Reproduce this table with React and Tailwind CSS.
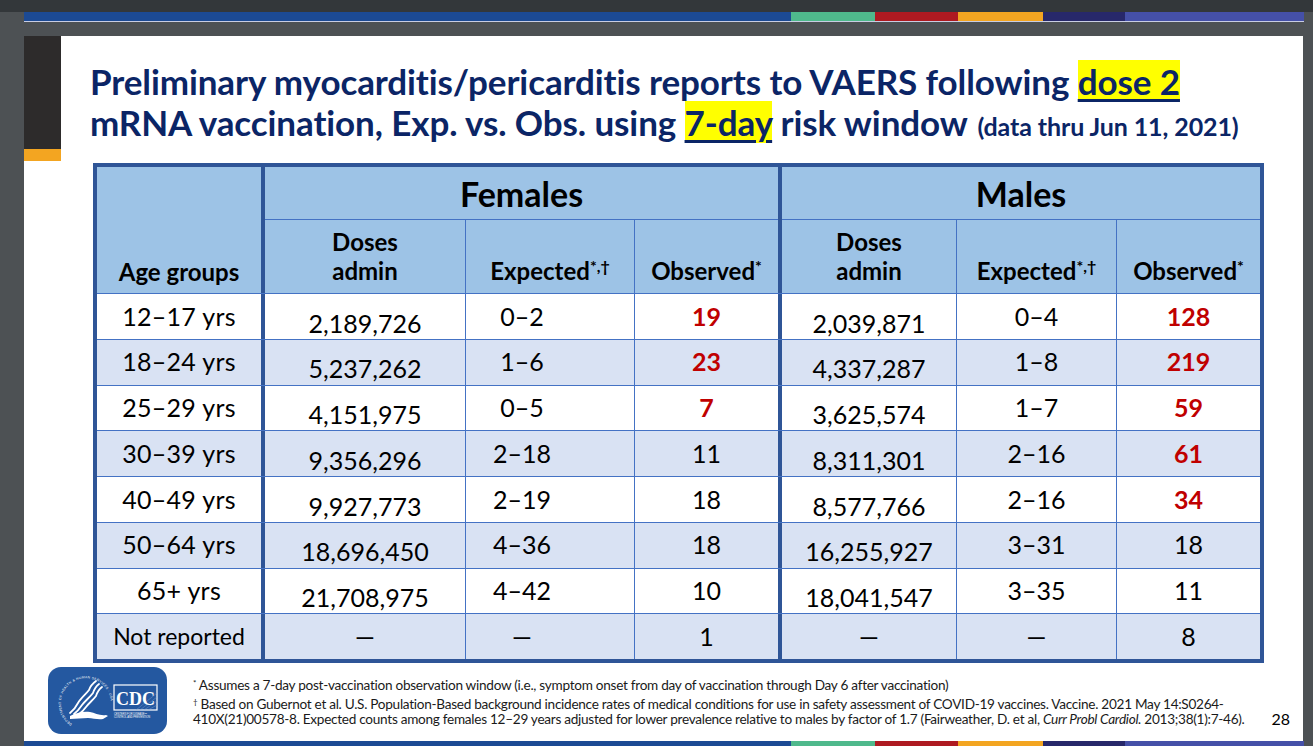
import React from "react";

const rows = [
  ["12–17 yrs", "2,189,726", "0–2", "19", true, "2,039,871", "0–4", "128", true],
  ["18–24 yrs", "5,237,262", "1–6", "23", true, "4,337,287", "1–8", "219", true],
  ["25–29 yrs", "4,151,975", "0–5", "7", true, "3,625,574", "1–7", "59", true],
  ["30–39 yrs", "9,356,296", "2–18", "11", false, "8,311,301", "2–16", "61", true],
  ["40–49 yrs", "9,927,773", "2–19", "18", false, "8,577,766", "2–16", "34", true],
  ["50–64 yrs", "18,696,450", "4–36", "18", false, "16,255,927", "3–31", "18", false],
  ["65+ yrs", "21,708,975", "4–42", "10", false, "18,041,547", "3–35", "11", false],
  ["Not reported", "—", "—", "1", false, "—", "—", "8", false],
];

function Stripe({ h }) {
  return (
    <div className={`flex w-[1280px] ${h}`}>
      <div className="w-[767px] bg-[#1c4a94]" />
      <div className="w-[84px] bg-[#4fb98c]" />
      <div className="w-[83px] bg-[#ae1a21]" />
      <div className="w-[85px] bg-[#f3a521]" />
      <div className="w-[82px] bg-[#27286a]" />
      <div className="w-[179px] bg-[#4550a8]" />
    </div>
  );
}

function CdcLogo() {
  return (
    <svg width="119" height="67" viewBox="0 0 119 67">
      <rect x="0" y="0" width="119" height="67" rx="13" fill="#2458a0" />
      <defs>
        <path id="sealArc" d="M24 57 A25 25 0 1 1 52 57" />
      </defs>
      <text fontSize="3.3" fill="white" fontFamily="Liberation Sans, sans-serif" letterSpacing="0.35">
        <textPath href="#sealArc">DEPARTMENT OF HEALTH &amp; HUMAN SERVICES · USA</textPath>
      </text>
      <path d="M48 14 C 44 17, 42 20, 41 23 C 38 27, 33 31, 30 36 C 28 40, 26 43, 22 46" stroke="white" strokeWidth="1.8" fill="none" strokeLinecap="round" />
      <path d="M51 17 C 47 20, 46 23, 45 26 C 42 30, 37 34, 34 38 C 32 41, 30 44, 26 47" stroke="white" strokeWidth="1.8" fill="none" strokeLinecap="round" />
      <path d="M54 20 C 50 23, 49 26, 48 29 C 45 33, 41 36, 38 40 C 36 43, 34 45, 30 48" stroke="white" strokeWidth="1.8" fill="none" strokeLinecap="round" />
      <path d="M22 49 C 28 46, 35 44, 42 45 C 47 46, 52 49, 58 48 L 60 49 L 55 52 C 50 53, 45 51, 40 51 C 34 51, 28 52, 22 52 Z" fill="white" />
      <rect x="66" y="18" width="43" height="25" fill="#2458a0" stroke="white" strokeWidth="1.2" />
      <path d="M92 43 L109 30 M96 43 L109 34 M100 43 L109 38 M88 43 L109 26" stroke="#7fa3d6" strokeWidth="0.4" />
      <text x="87.5" y="38" textAnchor="middle" fontFamily="Liberation Serif, serif" fontWeight="bold" fontSize="18" fill="white">CDC</text>
      <text x="66" y="47.5" fontFamily="Liberation Sans, sans-serif" fontSize="2.6" fill="white">CENTERS FOR DISEASE™</text>
      <text x="66" y="51" fontFamily="Liberation Sans, sans-serif" fontSize="2.6" fill="white">CONTROL AND PREVENTION</text>
    </svg>
  );
}

function Sep() {
  return <div className="w-[4px] shrink-0 bg-[#2f5597]" />;
}

function DataRow({ r, i }) {
  const bg = i % 2 === 1 ? "bg-[#d9e2f3]" : "bg-white";
  const last = i === rows.length - 1;
  const dosesPad = last ? "" : "pt-[14px]";
  const obs = (v, red) =>
    red ? (
      <span className="font-bold text-[#c00000]">{v}</span>
    ) : (
      <span>{v}</span>
    );
  return (
    <div className={`flex h-[45.75px] border-t border-[#4472c4] ${bg} text-[25px] text-black`}>
      <div className={`w-[164px] flex items-center justify-center ${last ? "text-[23px]" : "tracking-[0.3px]"}`}>{r[0]}</div>
      <Sep />
      <div className={`w-[200px] flex items-center justify-center ${dosesPad}`}>{r[1]}</div>
      <div className="w-[169px] flex items-center justify-center border-l border-[#4472c4] pr-[56px]">{r[2]}</div>
      <div className="w-[144px] flex items-center justify-center border-l border-[#4472c4]">{obs(r[3], r[4])}</div>
      <Sep />
      <div className={`w-[174px] flex items-center justify-center ${dosesPad}`}>{r[5]}</div>
      <div className="w-[160px] flex items-center justify-center border-l border-[#4472c4]">{r[6]}</div>
      <div className="w-[144px] flex items-center justify-center border-l border-[#4472c4]">{obs(r[7], r[8])}</div>
    </div>
  );
}

function HeadCols({ w1, w2 }) {
  return (
    <div className="flex flex-1 text-[24px] leading-[29px]">
      <div className={`${w1} flex flex-col items-center justify-end pb-[8px]`}>
        <div>Doses</div>
        <div>admin</div>
      </div>
      <div className={`${w2} flex items-end justify-center pb-[8px] border-l border-[#4472c4]`}>
        <span>
          Expected<sup className="text-[16px]">*,†</sup>
        </span>
      </div>
      <div className="w-[144px] flex items-end justify-center pb-[8px] border-l border-[#4472c4]">
        <span>
          Observed<sup className="text-[16px]">*</sup>
        </span>
      </div>
    </div>
  );
}

function Table() {
  return (
    <div className="w-[1171px] border-4 border-[#2f5597] font-['Lato',sans-serif]">
      <div className="flex h-[126px] bg-[#9dc3e6] font-bold text-black">
        <div className="w-[164px] flex items-end justify-center pb-[7px] text-[24px] leading-[29px]">Age groups</div>
        <Sep />
        <div className="w-[513px] flex flex-col">
          <div className="h-[53px] flex items-center justify-center text-[34px] border-b border-[#4472c4]">Females</div>
          <HeadCols w1="w-[200px]" w2="w-[169px]" />
        </div>
        <Sep />
        <div className="w-[478px] flex flex-col">
          <div className="h-[53px] flex items-center justify-center text-[34px] border-b border-[#4472c4]">Males</div>
          <HeadCols w1="w-[174px]" w2="w-[160px]" />
        </div>
      </div>
      {rows.map((r, i) => (
        <DataRow key={i} r={r} i={i} />
      ))}
    </div>
  );
}

export default function App() {
  return (
    <div className="w-[1313px] h-[746px] bg-[#4d5154] overflow-hidden flex flex-col font-['Lato',sans-serif]">
      <div className="h-[12px] bg-[#33373a]" />
      <div className="ml-[24px]">
        <Stripe h="h-[9px]" />
        <div className="w-[1280px] h-px bg-[#c9cde3]" />
      </div>
      <div className="h-[14px]" />
      <div className="ml-[24px] w-[1279px] h-[705px] bg-white flex flex-col">
        <div className="flex h-[627px]">
          <div className="w-[37px] flex flex-col">
            <div className="h-[113px] bg-[#2d2b2b]" />
            <div className="h-[12px] bg-[#f3a521]" />
          </div>
          <div className="flex flex-col pl-[29px] pt-[25px]">
            <div className="text-[35px] leading-[41px] font-bold text-[#0b2566] tracking-[-0.1px] whitespace-nowrap">
              <div className="h-[41px]">
                Preliminary myocarditis/pericarditis reports to VAERS following{" "}
                <span className="bg-[#ffff00] underline decoration-[3px] underline-offset-[4px]">dose 2</span>
              </div>
              <div className="h-[41px]">
                mRNA vaccination, Exp. vs. Obs. using{" "}
                <span className="bg-[#ffff00] underline decoration-[3px] underline-offset-[4px]">7-day</span> risk window{" "}
                <span className="text-[25px] leading-[20px] ml-[2px]">(data thru Jun 11, 2021)</span>
              </div>
            </div>
            <div className="mt-[20px] ml-[3px]">
              <Table />
            </div>
          </div>
        </div>
        <div className="flex flex-1 pl-[24px] pr-[13px]">
          <div className="pt-[4px]">
            <CdcLogo />
          </div>
          <div className="ml-[26px] pt-[15px] text-[13.6px] leading-[15px] text-[#1a1a1a] tracking-[-0.28px] whitespace-nowrap">
            <div>
              <sup className="text-[8px]">*</sup> Assumes a 7-day post-vaccination observation window (i.e., symptom onset from day of vaccination through Day 6 after vaccination)
            </div>
            <div className="mt-[4px]">
              <sup className="text-[8px]">†</sup> Based on Gubernot et al. U.S. Population-Based background incidence rates of medical conditions for use in safety assessment of COVID-19 vaccines. Vaccine. 2021 May 14:S0264-
            </div>
            <div>
              410X(21)00578-8. Expected counts among females 12–29 years adjusted for lower prevalence relative to males by factor of 1.7 (Fairweather, D. et al, <i>Curr Probl Cardiol.</i> 2013;38(1):7-46).
            </div>
          </div>
          <div className="ml-auto pt-[44px] text-[16px] text-black">28</div>
        </div>
      </div>
      <div className="ml-[24px]">
        <Stripe h="h-[5px]" />
      </div>
    </div>
  );
}
